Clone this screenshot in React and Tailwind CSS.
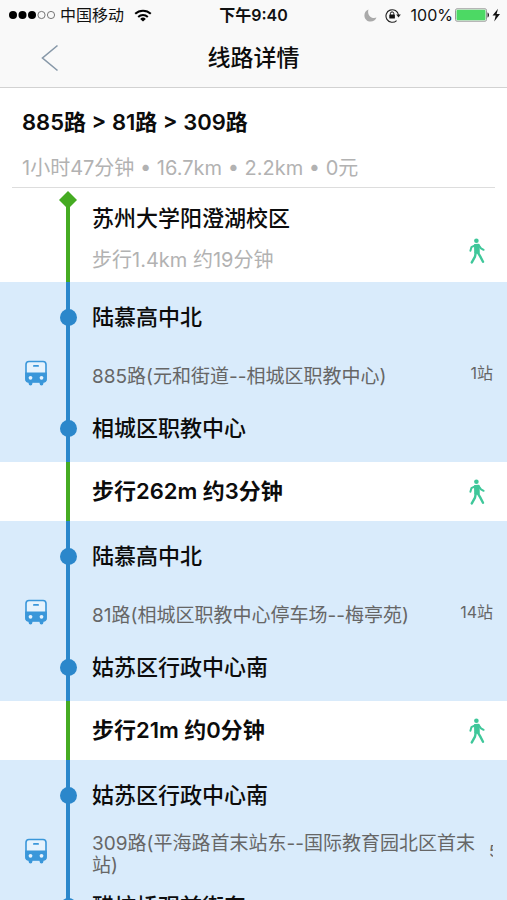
import React from 'react';

const legs = [
  { id: 1, from: '陆慕高中北', line: '885路(元和街道--相城区职教中心)', to: '相城区职教中心', stops: '1站', walk: '步行262m 约3分钟' },
  { id: 2, from: '陆慕高中北', line: '81路(相城区职教中心停车场--梅亭苑)', to: '姑苏区行政中心南', stops: '14站', walk: '步行21m 约0分钟' },
  { id: 3, from: '姑苏区行政中心南', line: '309路(平海路首末站东--国际教育园北区首末站)', to: '醋坊桥观前街东', stops: '5站' },
];

function StatusBar() {
  return (
    <div className="grid h-[30px] grid-cols-[1fr_auto_1fr] items-center px-2 text-[16px] leading-5 text-[#111]">
      <div className="flex items-center">
        <svg width="48" height="10" viewBox="0 0 48 10" aria-hidden="true">
          <circle cx="5" cy="5" r="4" fill="#000" />
          <circle cx="14.5" cy="5" r="4" fill="#000" />
          <circle cx="24" cy="5" r="4" fill="#000" />
          <circle cx="33.5" cy="5" r="3.6" fill="none" stroke="#555" strokeWidth="0.8" />
          <circle cx="43" cy="5" r="3.6" fill="none" stroke="#555" strokeWidth="0.8" />
        </svg>
        <span className="ml-1">中国移动</span>
        <svg className="ml-2.5" width="18" height="13" viewBox="0 0 18 13" fill="none" stroke="#000" aria-hidden="true">
          <path d="M1.2 4.8a11.2 11.2 0 0 1 15.6 0" strokeWidth="2" />
          <path d="M4.2 7.9a7 7 0 0 1 9.6 0" strokeWidth="2" />
          <path d="M9 12.6 6.2 9.9a4 4 0 0 1 5.6 0Z" fill="#000" stroke="none" />
        </svg>
      </div>
      <div className="font-semibold">下午9:40</div>
      <div className="flex items-center justify-end">
        <svg width="13" height="13" viewBox="0 0 13 13" aria-hidden="true">
          <path d="M4.4.5C1.9 1.4.4 3.7.4 6.4c0 3.4 2.8 6.2 6.2 6.2 2.7 0 5-1.6 5.9-4C8 10.400 2.800 6.500 4.400.5Z" fill="#aaa" />
        </svg>
        <svg className="ml-2" width="16" height="15" viewBox="0 0 16 15" fill="none" aria-hidden="true">
          <path d="M11.6 12.6A6.3 6.3 0 1 1 13.5 7" stroke="#222" strokeWidth="1.1" />
          <path d="M11.2 6.6h4.6l-2.3 2.8Z" fill="#222" />
          <rect x="4.3" y="6.6" width="5.6" height="4" rx=".5" fill="#111" />
          <path d="M5.4 6.8V5.6a1.7 1.7 0 0 1 3.4 0v1.2" stroke="#111" />
        </svg>
        <span className="ml-2.5">100%</span>
        <svg className="-mr-1 ml-0.5" width="48" height="14" viewBox="0 0 48 14" aria-hidden="true">
          <rect x=".5" y=".8" width="31" height="12.4" rx="1.5" fill="#fff" stroke="#999" />
          <rect x="1.500" y="1.8" width="29" height="10.4" rx="1" fill="#4cd964" />
          <path d="M32.500 4.500c2 .6 2 4.400 0 5Z" fill="#222" />
          <path d="M43 .8 37.500 7.600h3.200L39.200 13.400l5.800-7.300h-3.400Z" fill="#111" />
        </svg>
      </div>
    </div>
  );
}

function BusIcon() {
  return (
    <svg width="24" height="26" viewBox="0 0 24 26" aria-hidden="true">
      <rect x="2" y="1.5" width="20" height="20" rx="3" fill="#e6f3fd" stroke="#3a97da" strokeWidth="1.6" />
      <path d="M1.2 12.5h21.6v6.8a3.4 3.4 0 0 1-3.4 3.4H4.6a3.4 3.4 0 0 1-3.4-3.4Z" fill="#3a97da" />
      <rect x="9" y="5" width="6" height="1.8" rx=".9" fill="#3a97da" />
      <circle cx="6.5" cy="17.8" r="1.9" fill="#e6f3fd" />
      <circle cx="17.5" cy="17.8" r="1.9" fill="#e6f3fd" />
      <path d="M4.6 22h3.8v1.6a1.6 1.6 0 0 1-3.8 0ZM15.6 22h3.8v1.6a1.6 1.6 0 0 1-3.8 0Z" fill="#3a97da" />
    </svg>
  );
}

function Row({ height, rail, marker, icon, children }) {
  return (
    <div className={`grid grid-cols-[60px_16px_1fr] grid-rows-1 ${height}`}>
      <div className="flex items-center justify-center pl-3">{icon}</div>
      <div className="relative flex items-center justify-center">
        <span className={`absolute inset-y-0 left-1/2 w-1 -translate-x-1/2 ${rail}`} />
        {marker && <span className="relative size-[17px] shrink-0 rounded-full bg-[#2b87cb]" />}
      </div>
      <div className="flex min-w-0 items-center pr-[14px] pl-4">{children}</div>
    </div>
  );
}

function WalkIcon() {
  return (
    <svg
      className="mr-2 ml-auto shrink-0"
      width="16"
      height="26"
      viewBox="0 0 16 26"
      fill="none"
      stroke="#3fc79a"
      strokeLinecap="round"
      strokeLinejoin="round"
      aria-hidden="true"
    >
      <circle cx="7.4" cy="2.7" r="2.3" fill="#3fc79a" stroke="none" />
      <path d="M6 7 9.600 6.800 9.800 14.400 6.200 14.600Z" fill="#3fc79a" strokeWidth="2" />
      <path d="M6 7.400 2.400 9.200 1.400 12.800" strokeWidth="2" />
      <path d="M9.800 7.400 12 10.400 14.600 11.800" strokeWidth="2" />
      <path d="M6.800 14.400 6 18.600 2.800 24.400" strokeWidth="2.400" />
      <path d="M8.800 14.400 11.200 18.400 14 23.800" strokeWidth="2.400" />
    </svg>
  );
}

function Leg({ leg }) {
  return (
    <>
      <li className="bg-[#d9ebfb]">
        <Row height="h-[70px]" rail="bg-[#2b87cb]" marker>
          <span className="text-[22px] font-medium">{leg.from}</span>
        </Row>
        <Row height="h-[42px]" rail="bg-[#2b87cb]" icon={<BusIcon />}>
          <span className="max-w-[calc(100%-12px)] shrink-0 pt-2 text-[19px] leading-[22px] text-[#666]">{leg.line}</span>
          <span className="ml-2 flex-1 overflow-hidden text-right text-[16px] whitespace-nowrap text-[#666]">{leg.stops}</span>
        </Row>
        <Row height="h-[68px]" rail="bg-[#2b87cb]" marker>
          <span className="text-[22px] font-medium">{leg.to}</span>
        </Row>
      </li>
      {leg.walk && (
        <li>
          <Row height="h-[59px]" rail="bg-[#45ab22]">
            <span className="text-[22px] font-semibold">{leg.walk}</span>
            <WalkIcon />
          </Row>
        </li>
      )}
    </>
  );
}

export default function App() {
  return (
    <div className="flex h-screen flex-col overflow-hidden bg-white font-['Inter','Noto_Sans_CJK_SC',sans-serif] text-[#0c0c0c]" lang="zh-CN">
      <header className="h-[88px] shrink-0 border-b border-[#d2d2d2] bg-[#f9f9f9]">
        <StatusBar />
        <div className="grid h-[56px] grid-cols-[100px_1fr_100px] items-center">
          <button type="button" aria-label="返回" className="flex h-full items-center pl-10">
            <svg width="20" height="28" viewBox="0 0 20 28" fill="none" stroke="#8798a8" strokeWidth="1.6" aria-hidden="true">
              <path d="M17.5 1.5 2.5 14l15 12.5" />
            </svg>
          </button>
          <h1 className="text-center text-[23px] font-medium">线路详情</h1>
        </div>
      </header>
      <main className="min-h-0 flex-1 overflow-y-auto [scrollbar-width:none]">
        <section className="mx-3 h-[100px] border-b border-[#ddd] px-[10px] pt-[18px]">
          <h2 className="text-[22px] leading-8 font-semibold">885路 &gt; 81路 &gt; 309路</h2>
          <p className="mt-4 text-[20px] leading-7 text-[#b2b2b2]">1小时47分钟 • 16.7km • 2.2km • 0元</p>
        </section>
        <ol>
          <li className="grid h-[94px] grid-cols-[60px_16px_1fr]">
            <div />
            <div className="flex flex-col items-center pt-[3px]">
              <svg className="shrink-0" width="18" height="18" viewBox="0 0 18 18" aria-hidden="true">
                <path d="m9 0 9 9-9 9-9-9Z" fill="#45ab22" />
              </svg>
              <span className="-mt-1 w-1 flex-1 bg-[#45ab22]" />
            </div>
            <div className="flex items-end justify-between pr-[14px] pb-1.5 pl-4">
              <div>
                <p className="text-[22px] leading-8 font-medium">苏州大学阳澄湖校区</p>
                <p className="mt-2.5 text-[20px] leading-8 text-[#b2b2b2]">步行1.4km 约19分钟</p>
              </div>
              <div className="pb-3">
                <WalkIcon />
              </div>
            </div>
          </li>
          {legs.map((leg) => (
            <Leg key={leg.id} leg={leg} />
          ))}
        </ol>
      </main>
    </div>
  );
}
